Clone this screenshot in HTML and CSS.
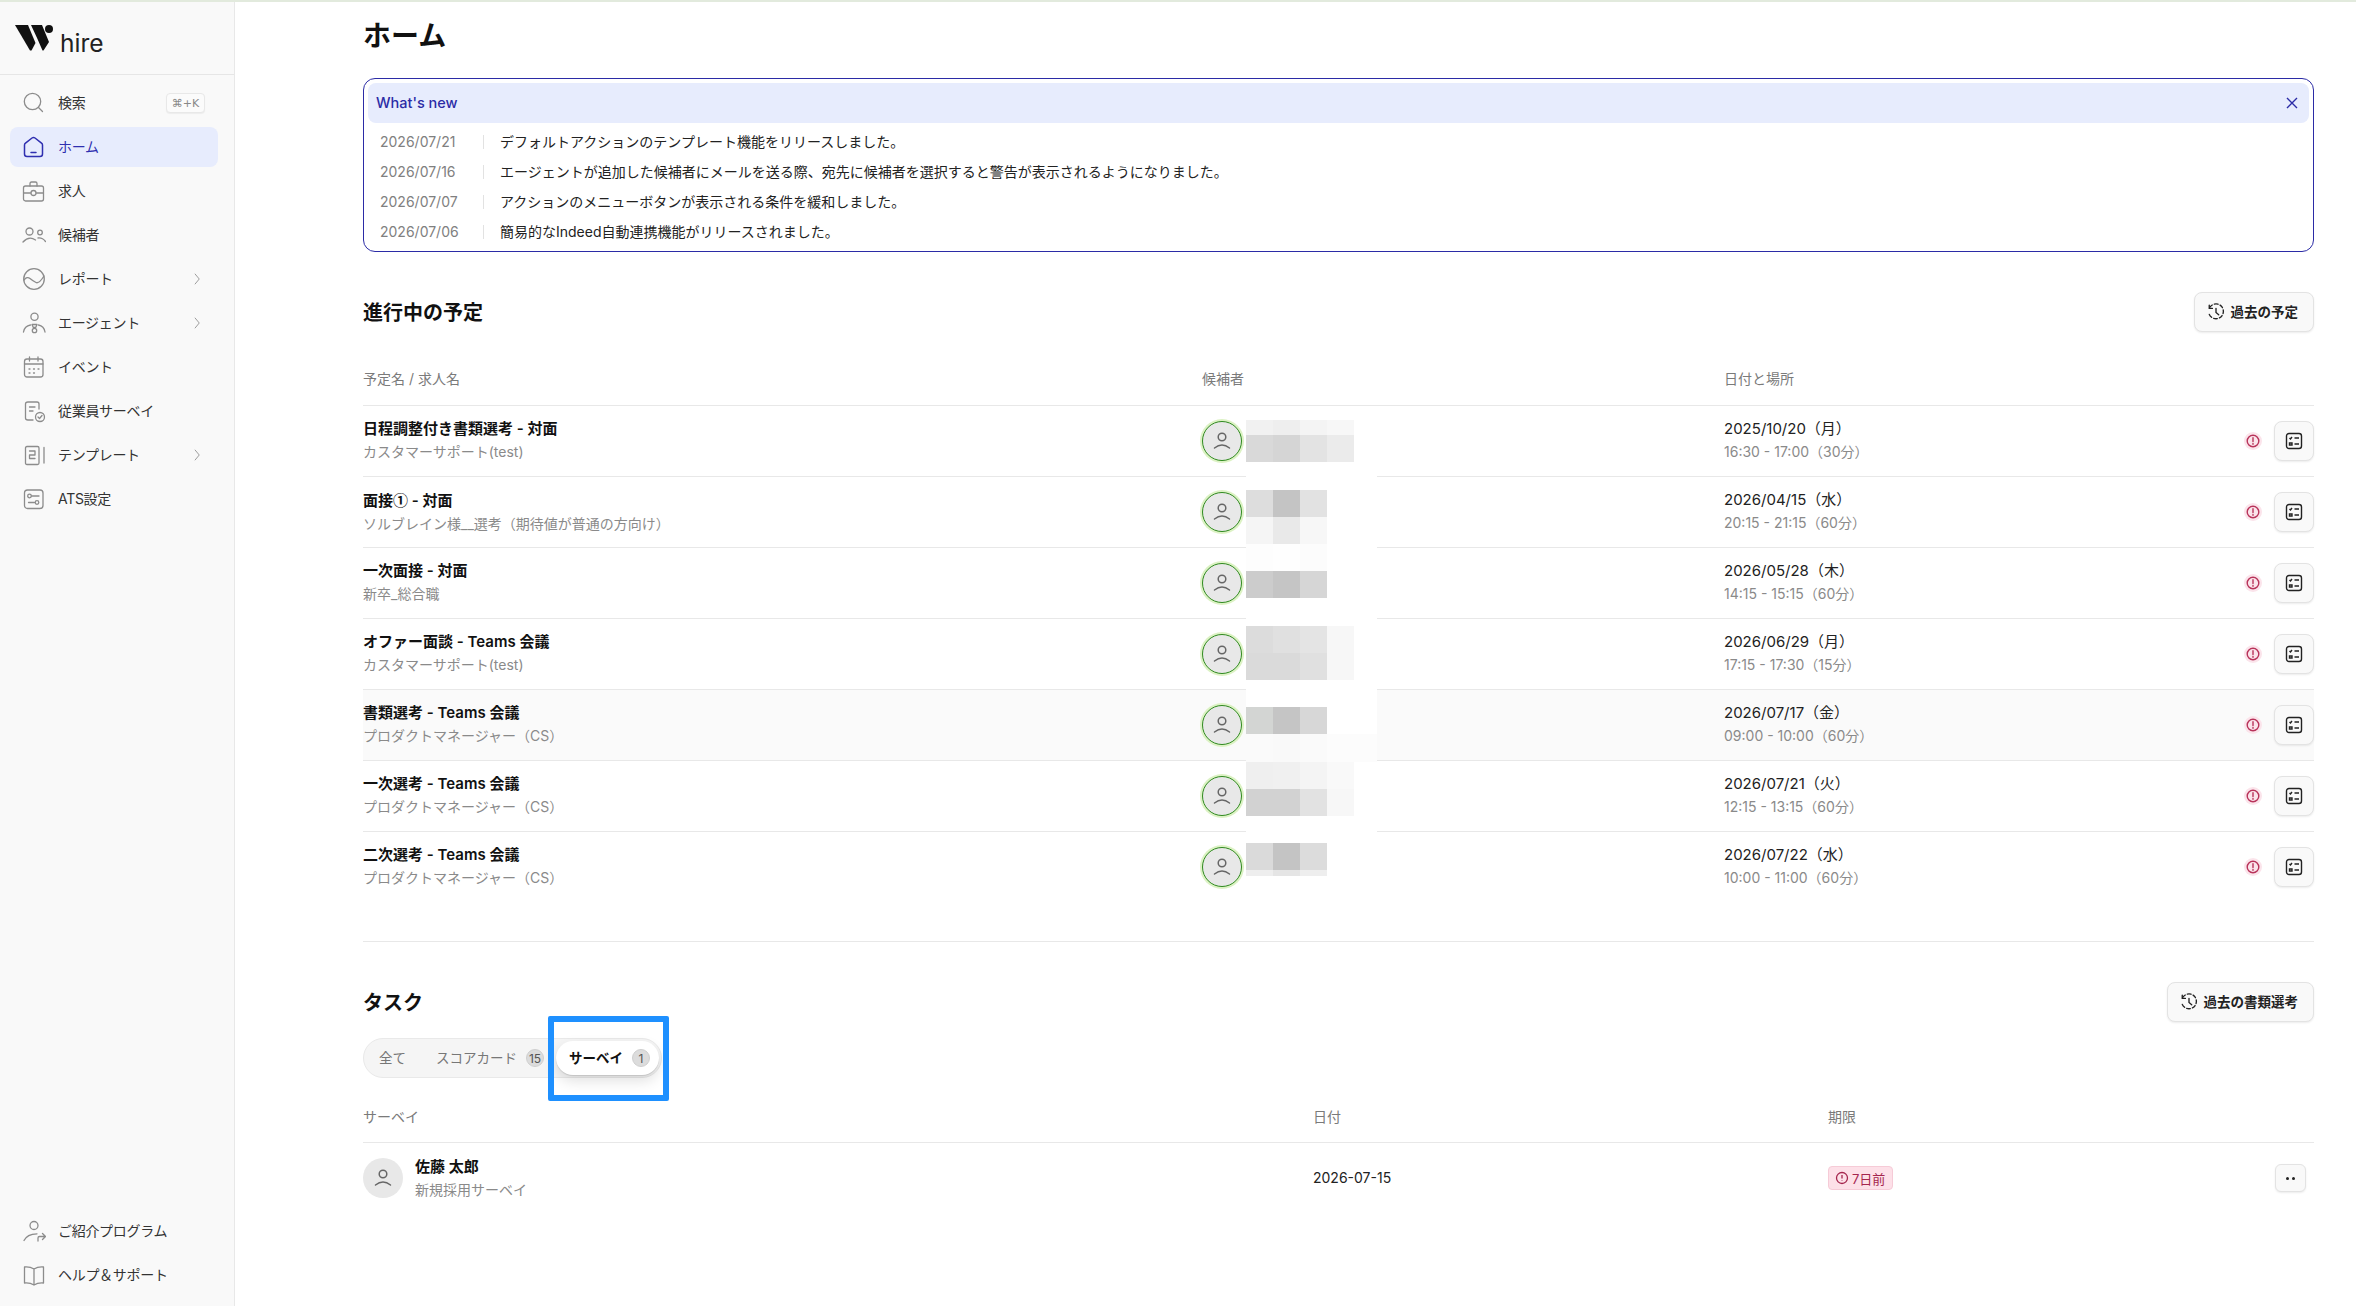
FILE: index.html
```html
<!DOCTYPE html>
<html lang="ja">
<head>
    <meta charset="UTF-8">
    <title>ホーム - hire</title>
    <link rel="stylesheet" href="styles.css">
</head>
<body>
    <div class="top-strip"></div>
    <div class="layout">
        <aside class="sidebar">
            <div class="logo">
                <svg class="logo-mark" width="44" height="30" viewBox="0 0 44 30">
                    <path d="M0 3 H13 L20.5 21 L16.5 28.5 H15 Z"/>
                    <path d="M16 3 H27 L34 20 L28.5 28.5 H27.5 L22.5 17 Z" />
                    <circle cx="34" cy="7" r="4"/>
                </svg>
                <span class="logo-text">hire</span>
            </div>
            <nav class="nav">
                <a class="nav-item">
                    <svg class="ico" viewBox="0 0 24 24"><circle cx="10.5" cy="10.5" r="8.2"/><path d="M16.5 16.5 20.5 20.5"/></svg>
                    <span>検索</span>
                    <kbd class="kbd">⌘+K</kbd>
                </a>
                <a class="nav-item active">
                    <svg class="ico" viewBox="0 0 24 24"><path d="M2.5 10Q2.5 9 3.5 8.2L10 3Q11.5 2 13 3L19.5 8.2Q20.5 9 20.5 10V19Q20.5 21.5 18 21.5H5Q2.5 21.5 2.5 19Z"/><path d="M9 17.5H14"/></svg>
                    <span>ホーム</span>
                </a>
                <a class="nav-item">
                    <svg class="ico" viewBox="0 0 24 24"><rect x="1.5" y="7" width="20" height="15" rx="2"/><path d="M8 7V4.5Q8 3 9.5 3H13.5Q15 3 15 4.5V7M2 14H8.5M14.5 14H21"/><circle cx="11.5" cy="14" r="2.5"/></svg>
                    <span>求人</span>
                </a>
                <a class="nav-item">
                    <svg class="ico" viewBox="0 0 24 24"><circle cx="7.5" cy="8.5" r="3.5"/><circle cx="18" cy="9.5" r="2.3"/><path d="M1 19Q7 12.5 13.5 17M16 15Q20.5 14.5 23.5 18.5"/></svg>
                    <span>候補者</span>
                </a>
                <a class="nav-item">
                    <svg class="ico" viewBox="0 0 24 24"><circle cx="12" cy="12" r="10.3"/><path d="M2 13Q5 9 8 11.5T14 15.5T22 9"/></svg>
                    <span>レポート</span>
                    <svg class="chev" viewBox="0 0 8 14"><path d="M1 1 6 7 1 13"/></svg>
                </a>
                <a class="nav-item">
                    <svg class="ico" viewBox="0 0 24 24"><circle cx="12.5" cy="5.8" r="3.6"/><path d="M1.5 21Q2.5 15 8.5 14M16.5 14Q22 15 23 21M10 13.5H15L13.7 16.5H11.3Z"/><circle cx="12.5" cy="19.5" r="2.2"/></svg>
                    <span>エージェント</span>
                    <svg class="chev" viewBox="0 0 8 14"><path d="M1 1 6 7 1 13"/></svg>
                </a>
                <a class="nav-item">
                    <svg class="ico" viewBox="0 0 24 24"><rect x="2.5" y="4" width="18.5" height="18" rx="2.5"/><path d="M2.5 9H21M7.5 2V6M16 2V6M7 14H8M11.5 14H12.5M16 14H17M7 18H8M11.5 18H12.5"/></svg>
                    <span>イベント</span>
                </a>
                <a class="nav-item">
                    <svg class="ico" viewBox="0 0 24 24"><path d="M17 10V5Q17 3 15 3H6Q3.5 3 3.5 5V19Q3.5 21 6 21H11"/><path d="M7.5 8H13M7.5 12H11"/><circle cx="18" cy="18" r="4.5"/><path d="M16 18 17.5 19.5 20 16.5"/></svg>
                    <span>従業員サーベイ</span>
                </a>
                <a class="nav-item">
                    <svg class="ico" viewBox="0 0 24 24"><path d="M15.5 21.5H5Q3.5 21.5 3.5 20V5Q3.5 3.5 5 3.5H15.5Q17 3.5 17 5V20Q17 21.5 15.5 21.5ZM22 4.5V20"/><path d="M7.5 8H13V12H7.5V15.5H13"/></svg>
                    <span>テンプレート</span>
                    <svg class="chev" viewBox="0 0 8 14"><path d="M1 1 6 7 1 13"/></svg>
                </a>
                <a class="nav-item">
                    <svg class="ico" viewBox="0 0 24 24"><rect x="2.5" y="3" width="18.5" height="18.5" rx="3"/><path d="M9.5 9H17M6.5 15.5H12.5"/><circle cx="7.5" cy="9" r="1.8"/><circle cx="15" cy="15.5" r="1.8"/></svg>
                    <span>ATS設定</span>
                </a>
            </nav>
            <nav class="nav nav-bottom">
                <a class="nav-item">
                    <svg class="ico" viewBox="0 0 24 24"><circle cx="12" cy="6.5" r="4"/><path d="M2 21.5Q5 15 15 14.8M16 22V19Q16 17.5 17.5 17.5H23M20.5 14.5 23.5 17.5 20.5 20.5"/></svg>
                    <span>ご紹介プログラム</span>
                </a>
                <a class="nav-item">
                    <svg class="ico" viewBox="0 0 24 24"><path d="M12 6Q8 3.5 2.5 4V20Q8 19.5 12 22Q16 19.5 21.5 20V4Q16 3.5 12 6ZM12 6V22"/></svg>
                    <span>ヘルプ＆サポート</span>
                </a>
            </nav>
        </aside>

        <main class="main">
            <h1 class="page-title">ホーム</h1>

            <section class="news">
                <div class="news-head">
                    <span>What's new</span>
                    <svg class="news-close" viewBox="0 0 14 14"><path d="M2 2 12 12M12 2 2 12"/></svg>
                </div>
                <ul class="news-list">
                    <li><span class="news-date">2026/07/21</span><span class="news-text">デフォルトアクションのテンプレート機能をリリースしました。</span></li>
                    <li><span class="news-date">2026/07/16</span><span class="news-text">エージェントが追加した候補者にメールを送る際、宛先に候補者を選択すると警告が表示されるようになりました。</span></li>
                    <li><span class="news-date">2026/07/07</span><span class="news-text">アクションのメニューボタンが表示される条件を緩和しました。</span></li>
                    <li><span class="news-date">2026/07/06</span><span class="news-text">簡易的なIndeed自動連携機能がリリースされました。</span></li>
                </ul>
            </section>

            <section class="section-head schedule-head">
                <h2>進行中の予定</h2>
                <button class="btn">
                    <svg class="btn-ico" viewBox="0 0 20 20"><path class="dash" d="M3 5A8.2 8.2 0 1 1 2 11"/><path d="M2.5 2.5V6H6M10 6V10.5L13 13"/></svg>
                    過去の予定
                </button>
            </section>

            <div class="table schedule">
                <div class="row row-head">
                    <span>予定名 / 求人名</span><span>候補者</span><span>日付と場所</span>
                </div>

                <div class="row">
                    <div><div class="title">日程調整付き書類選考 - 対面</div><div class="sub">カスタマーサポート(test)</div></div>
                    <div class="avatar green"><svg viewBox="0 0 24 24"><circle cx="12" cy="8" r="3.8"/><path d="M4.5 19Q12 13 19.5 19"/></svg></div>
                    <div><div class="when">2025/10/20（月）</div><div class="sub">16:30 - 17:00（30分）</div></div>
                    <div class="actions">
                        <svg class="alert" viewBox="0 0 18 18"><circle class="halo" cx="9" cy="9" r="9"/><circle cx="9" cy="9" r="5.8"/><path d="M9 5.8V9.5M9 11.5V12.3"/></svg>
                        <button class="icon-btn"><svg viewBox="0 0 18 18"><rect x="1.5" y="1.5" width="15" height="15" rx="2.5"/><path d="M4.5 6 5.5 7 7 5M9.5 6H14M4.5 11H7V13H4.5ZM9.5 12H14"/></svg></button>
                    </div>
                </div>
                <div class="row">
                    <div><div class="title">面接<span class="cjk">①</span> - 対面</div><div class="sub">ソルブレイン様__選考（期待値が普通の方向け）</div></div>
                    <div class="avatar green"><svg viewBox="0 0 24 24"><circle cx="12" cy="8" r="3.8"/><path d="M4.5 19Q12 13 19.5 19"/></svg></div>
                    <div><div class="when">2026/04/15（水）</div><div class="sub">20:15 - 21:15（60分）</div></div>
                    <div class="actions">
                        <svg class="alert" viewBox="0 0 18 18"><circle class="halo" cx="9" cy="9" r="9"/><circle cx="9" cy="9" r="5.8"/><path d="M9 5.8V9.5M9 11.5V12.3"/></svg>
                        <button class="icon-btn"><svg viewBox="0 0 18 18"><rect x="1.5" y="1.5" width="15" height="15" rx="2.5"/><path d="M4.5 6 5.5 7 7 5M9.5 6H14M4.5 11H7V13H4.5ZM9.5 12H14"/></svg></button>
                    </div>
                </div>
                <div class="row">
                    <div><div class="title">一次面接 - 対面</div><div class="sub">新卒_総合職</div></div>
                    <div class="avatar green"><svg viewBox="0 0 24 24"><circle cx="12" cy="8" r="3.8"/><path d="M4.5 19Q12 13 19.5 19"/></svg></div>
                    <div><div class="when">2026/05/28（木）</div><div class="sub">14:15 - 15:15（60分）</div></div>
                    <div class="actions">
                        <svg class="alert" viewBox="0 0 18 18"><circle class="halo" cx="9" cy="9" r="9"/><circle cx="9" cy="9" r="5.8"/><path d="M9 5.8V9.5M9 11.5V12.3"/></svg>
                        <button class="icon-btn"><svg viewBox="0 0 18 18"><rect x="1.5" y="1.5" width="15" height="15" rx="2.5"/><path d="M4.5 6 5.5 7 7 5M9.5 6H14M4.5 11H7V13H4.5ZM9.5 12H14"/></svg></button>
                    </div>
                </div>
                <div class="row">
                    <div><div class="title">オファー面談 - Teams 会議</div><div class="sub">カスタマーサポート(test)</div></div>
                    <div class="avatar green"><svg viewBox="0 0 24 24"><circle cx="12" cy="8" r="3.8"/><path d="M4.5 19Q12 13 19.5 19"/></svg></div>
                    <div><div class="when">2026/06/29（月）</div><div class="sub">17:15 - 17:30（15分）</div></div>
                    <div class="actions">
                        <svg class="alert" viewBox="0 0 18 18"><circle class="halo" cx="9" cy="9" r="9"/><circle cx="9" cy="9" r="5.8"/><path d="M9 5.8V9.5M9 11.5V12.3"/></svg>
                        <button class="icon-btn"><svg viewBox="0 0 18 18"><rect x="1.5" y="1.5" width="15" height="15" rx="2.5"/><path d="M4.5 6 5.5 7 7 5M9.5 6H14M4.5 11H7V13H4.5ZM9.5 12H14"/></svg></button>
                    </div>
                </div>
                <div class="row row-hover">
                    <div><div class="title">書類選考 - Teams 会議</div><div class="sub">プロダクトマネージャー（CS）</div></div>
                    <div class="avatar green"><svg viewBox="0 0 24 24"><circle cx="12" cy="8" r="3.8"/><path d="M4.5 19Q12 13 19.5 19"/></svg></div>
                    <div><div class="when">2026/07/17（金）</div><div class="sub">09:00 - 10:00（60分）</div></div>
                    <div class="actions">
                        <svg class="alert" viewBox="0 0 18 18"><circle class="halo" cx="9" cy="9" r="9"/><circle cx="9" cy="9" r="5.8"/><path d="M9 5.8V9.5M9 11.5V12.3"/></svg>
                        <button class="icon-btn"><svg viewBox="0 0 18 18"><rect x="1.5" y="1.5" width="15" height="15" rx="2.5"/><path d="M4.5 6 5.5 7 7 5M9.5 6H14M4.5 11H7V13H4.5ZM9.5 12H14"/></svg></button>
                    </div>
                </div>
                <div class="row">
                    <div><div class="title">一次選考 - Teams 会議</div><div class="sub">プロダクトマネージャー（CS）</div></div>
                    <div class="avatar green"><svg viewBox="0 0 24 24"><circle cx="12" cy="8" r="3.8"/><path d="M4.5 19Q12 13 19.5 19"/></svg></div>
                    <div><div class="when">2026/07/21（火）</div><div class="sub">12:15 - 13:15（60分）</div></div>
                    <div class="actions">
                        <svg class="alert" viewBox="0 0 18 18"><circle class="halo" cx="9" cy="9" r="9"/><circle cx="9" cy="9" r="5.8"/><path d="M9 5.8V9.5M9 11.5V12.3"/></svg>
                        <button class="icon-btn"><svg viewBox="0 0 18 18"><rect x="1.5" y="1.5" width="15" height="15" rx="2.5"/><path d="M4.5 6 5.5 7 7 5M9.5 6H14M4.5 11H7V13H4.5ZM9.5 12H14"/></svg></button>
                    </div>
                </div>
                <div class="row row-last">
                    <div><div class="title">二次選考 - Teams 会議</div><div class="sub">プロダクトマネージャー（CS）</div></div>
                    <div class="avatar green"><svg viewBox="0 0 24 24"><circle cx="12" cy="8" r="3.8"/><path d="M4.5 19Q12 13 19.5 19"/></svg></div>
                    <div><div class="when">2026/07/22（水）</div><div class="sub">10:00 - 11:00（60分）</div></div>
                    <div class="actions">
                        <svg class="alert" viewBox="0 0 18 18"><circle class="halo" cx="9" cy="9" r="9"/><circle cx="9" cy="9" r="5.8"/><path d="M9 5.8V9.5M9 11.5V12.3"/></svg>
                        <button class="icon-btn"><svg viewBox="0 0 18 18"><rect x="1.5" y="1.5" width="15" height="15" rx="2.5"/><path d="M4.5 6 5.5 7 7 5M9.5 6H14M4.5 11H7V13H4.5ZM9.5 12H14"/></svg></button>
                    </div>
                </div>

                <!-- candidate names are pixelated in the capture -->
                <div class="mosaic">
                    <div class="m-row h15"><i class="f1"></i><i class="ee"></i><i class="f4"></i><i class="f7"></i></div>
                    <div class="m-row"><i class="d9"></i><i class="d5"></i><i class="e3"></i><i class="eb"></i></div>
                    <div class="m-row h28"></div>
                    <div class="m-row"><i class="dd"></i><i class="c4"></i><i class="e2"></i></div>
                    <div class="m-row"><i class="f5"></i><i class="e9"></i><i class="f7"></i></div>
                    <div class="m-row"><i class="fd"></i><i class="fe"></i><i class="fc"></i></div>
                    <div class="m-row"><i class="cc"></i><i class="c5"></i><i class="d6"></i></div>
                    <div class="m-row h28"></div>
                    <div class="m-row"><i class="dc"></i><i class="e0"></i><i class="e4"></i><i class="f7"></i></div>
                    <div class="m-row"><i class="da"></i><i class="da"></i><i class="e0"></i><i class="f7"></i></div>
                    <div class="m-row"></div>
                    <div class="m-row"><i class="d3"></i><i class="c5"></i><i class="d7"></i></div>
                    <div class="m-row h28"><i class="fa"></i><i class="f9"></i><i class="fa"></i><i class="fc"></i><i class="fc"></i></div>
                    <div class="m-row"><i class="ef"></i><i class="f0"></i><i class="f4"></i><i class="f9"></i></div>
                    <div class="m-row"><i class="d2"></i><i class="d2"></i><i class="e2"></i><i class="f7"></i></div>
                    <div class="m-row"></div>
                    <div class="m-row"><i class="da"></i><i class="c4"></i><i class="dc"></i></div>
                    <div class="m-row h6"><i class="ee"></i><i class="e5"></i><i class="ee"></i></div>
                </div>
            </div>

            <hr class="divider">

            <section class="section-head">
                <h2>タスク</h2>
                <button class="btn">
                    <svg class="btn-ico" viewBox="0 0 20 20"><path class="dash" d="M3 5A8.2 8.2 0 1 1 2 11"/><path d="M2.5 2.5V6H6M10 6V10.5L13 13"/></svg>
                    過去の書類選考
                </button>
            </section>

            <div class="tabs">
                <span class="tab">全て</span>
                <span class="tab tab-score">スコアカード<b class="count">15</b></span>
                <span class="tab tab-active">サーベイ<b class="count">1</b></span>
                <span class="highlight"></span>
            </div>

            <div class="table tasks">
                <div class="row row-head task-head">
                    <span>サーベイ</span><span>日付</span><span>期限</span>
                </div>
                <div class="row row-last">
                    <div class="person">
                        <div class="avatar"><svg viewBox="0 0 24 24"><circle cx="12" cy="8" r="3.8"/><path d="M4.5 19Q12 13 19.5 19"/></svg></div>
                        <div><div class="title">佐藤 太郎</div><div class="sub">新規採用サーベイ</div></div>
                    </div>
                    <div class="when">2026-07-15</div>
                    <div><span class="overdue"><svg viewBox="0 0 14 14"><circle cx="7" cy="7" r="5.5"/><path d="M7 4V7.5M7 9.5V10"/></svg>7日前</span></div>
                    <div class="actions"><button class="dots-btn"><i></i><i></i></button></div>
                </div>
            </div>
        </main>
    </div>
</body>
</html>
```

FILE: styles.css
```css
* {
    box-sizing: border-box;
}
body {
    margin: 0;
    font-family: Inter, "Noto Sans CJK JP", sans-serif;
    font-size: 14px;
    color: #111;
    background: white;
    overflow: hidden;
}
.cjk {
    font-family: "Noto Sans CJK JP", sans-serif;
}
.top-strip {
    height: 2px;
    background: #e2eadd;
}
.layout {
    display: flex;
    height: 1304px;
}

/* sidebar */
.sidebar {
    width: 235px;
    flex: none;
    display: flex;
    flex-direction: column;
    background: #f9f9f9;
    border-right: 1px solid #e8e8e8;
}
.logo {
    height: 73px;
    display: flex;
    align-items: flex-start;
    border-bottom: 1px solid #e6e6e6;
    padding: 20px 0 0 15px;
}
.logo-mark {
    flex: none;
    fill: #111;
}
.logo-text {
    margin: 6px 0 0 1px;
    font-size: 24.5px;
    line-height: 30px;
    color: #222;
}
.nav {
    display: flex;
    flex-direction: column;
    gap: 4px;
    padding: 8px 16px 0 10px;
}
.nav-bottom {
    margin-top: auto;
    padding-top: 0;
    padding-bottom: 11px;
}
.nav-item {
    height: 40px;
    display: flex;
    align-items: center;
    gap: 12px;
    padding: 0 14px 0 12px;
    border-radius: 8px;
    color: #333;
    letter-spacing: -0.3px;
}
.nav-item span {
    padding-bottom: 2px;
}
.nav-item.active {
    background: #e7ecfd;
    color: #2f2fb0;
}
.ico {
    width: 24px;
    height: 24px;
    flex: none;
    fill: none;
    stroke: #8c8c8c;
    stroke-width: 1.3;
    stroke-linecap: round;
    stroke-linejoin: round;
}
.active .ico {
    stroke: #2f2fb0;
    stroke-width: 1.5;
}
.kbd {
    margin-left: auto;
    margin-right: -1px;
    width: 39px;
    height: 20px;
    display: flex;
    align-items: center;
    justify-content: center;
    font-family: "DejaVu Sans", sans-serif;
    font-size: 11px;
    letter-spacing: 0;
    color: #888;
    background: #fbfbfb;
    border: 1px solid #e8e8e8;
    border-radius: 4px;
    box-shadow: 0 1px 1px rgba(0,0,0,0.05);
}
.chev {
    width: 7px;
    height: 14px;
    margin-left: auto;
    margin-right: 3px;
    fill: none;
    stroke: #999;
    stroke-width: 1.1;
}

/* main column */
.main {
    flex: 1;
    min-width: 0;
    padding: 14px 42px 0 128px;
}
.page-title {
    margin: 0 0 22px;
    font-size: 28px;
    line-height: 40px;
    font-weight: 700;
}
.news {
    height: 174px;
    padding: 4px;
    border: 1px solid #2b2ba6;
    border-radius: 12px;
}
.news-head {
    height: 40px;
    display: flex;
    align-items: center;
    justify-content: space-between;
    padding: 0 10px 0 8px;
    background: #e7ecfd;
    border-radius: 8px;
    color: #2b2ba6;
    font-size: 14.5px;
    font-weight: 500;
}
.news-head span {
    padding-bottom: 2px;
}
.news-close {
    width: 14px;
    height: 14px;
    fill: none;
    stroke: #2b2ba6;
    stroke-width: 1.4;
}
.news-list {
    list-style: none;
    margin: 4px 0 0;
    padding: 0 0 0 12px;
}
.news-list li {
    height: 30px;
    display: flex;
    align-items: center;
}
.news-date {
    width: 104px;
    flex: none;
    color: #808080;
    border-right: 1px solid #e2e2e2;
    line-height: 14px;
}
.news-text {
    padding: 0 0 2px 16px;
    color: #222;
}
.section-head {
    height: 40px;
    display: flex;
    align-items: center;
    justify-content: space-between;
}
.schedule-head {
    margin-top: 40px;
}
.section-head h2 {
    margin: 0;
    padding-bottom: 2px;
    font-size: 20px;
    font-weight: 700;
}
.btn {
    height: 40px;
    display: flex;
    align-items: center;
    gap: 6px;
    padding: 0 15px 2px 12px;
    font: inherit;
    font-weight: 600;
    font-size: 13.5px;
    color: #222;
    background: #f9f9f9;
    border: 1px solid #e3e3e3;
    border-radius: 8px;
    box-shadow: 0 1px 2px rgba(0,0,0,0.08);
}
.btn-ico {
    width: 18px;
    height: 18px;
    margin-top: 2px;
    fill: none;
    stroke: #222;
    stroke-width: 1.5;
    stroke-linecap: round;
}
.btn-ico .dash {
    stroke-dasharray: 4 2.5;
}

/* tables */
.table {
    position: relative;
}
.row {
    display: grid;
    align-items: center;
    height: 71px;
    border-bottom: 1px solid #e8e8e8;
}
.schedule .row {
    grid-template-columns: 839px 522px 1fr auto;
}
.tasks .row {
    grid-template-columns: 950px 515px 1fr auto;
}
.row-head {
    height: 74px;
    padding: 36px 0 16px;
    line-height: 20px;
    color: #7a7a7a;
}
.task-head {
    height: 65px;
    padding-top: 29px;
}
.row-hover {
    background: #fafafa;
}
.row-last {
    border-bottom-color: transparent;
}
.title {
    line-height: 20px;
    font-size: 15px;
    font-weight: 600;
}
.schedule .title,
.schedule .when {
    margin-top: -1px;
}
.sub {
    margin-top: 3px;
    line-height: 20px;
    color: #8a8a8a;
}
.when {
    line-height: 20px;
    color: #222;
}
.schedule .when {
    font-size: 15px;
}
.avatar {
    width: 40px;
    height: 40px;
    display: flex;
    align-items: center;
    justify-content: center;
    border-radius: 50%;
    background: #e8e8e8;
}
.avatar svg {
    width: 24px;
    height: 24px;
    fill: none;
    stroke: #666;
    stroke-width: 1.5;
    stroke-linecap: round;
}
.avatar.green {
    border: 1.5px solid #2f8a1f;
    box-shadow: 0 0 0 2px #dcf2c4;
}
.actions {
    display: flex;
    align-items: center;
    gap: 12px;
}
.alert {
    width: 18px;
    height: 18px;
    fill: none;
    stroke: #b8335a;
    stroke-width: 1.4;
    stroke-linecap: round;
}
.alert .halo {
    fill: #fbe4eb;
    stroke: none;
}
.icon-btn {
    width: 40px;
    height: 40px;
    display: flex;
    align-items: center;
    justify-content: center;
    padding: 0;
    background: #f9f9f9;
    border: 1px solid #e3e3e3;
    border-radius: 8px;
    box-shadow: 0 1px 2px rgba(0,0,0,0.08);
}
.icon-btn svg {
    width: 18px;
    height: 18px;
    fill: none;
    stroke: #222;
    stroke-width: 1.4;
}

/* pixelated names */
.mosaic {
    position: absolute;
    left: 883px;
    top: 88px;
    width: 131px;
    background: white;
}
.m-row {
    display: flex;
    height: 27px;
}
.m-row i {
    width: 27px;
    flex: none;
}
.m-row i:nth-child(5) {
    width: 23px;
}
.h15 { height: 15px; }
.h28 { height: 28px; }
.h6 { height: 6px; }
.c4 { background: #c4c4c4; }
.c5 { background: #c5c5c5; }
.cc { background: #cccccc; }
.d2 { background: #d2d2d2; }
.d3 { background: #d3d5d3; }
.d5 { background: #d5d5d5; }
.d6 { background: #d6d6d6; }
.d7 { background: #d7d7d7; }
.d9 { background: #d9d9d9; }
.da { background: #dadada; }
.dc { background: #dcdcdc; }
.dd { background: #dddddd; }
.e0 { background: #e0e0e0; }
.e2 { background: #e2e2e2; }
.e3 { background: #e3e3e3; }
.e4 { background: #e4e4e4; }
.e5 { background: #e5e5e5; }
.e9 { background: #e9e9e9; }
.eb { background: #ebebeb; }
.ee { background: #eeeeee; }
.ef { background: #efefef; }
.f0 { background: #f0f0f0; }
.f1 { background: #f1f1f1; }
.f4 { background: #f4f4f4; }
.f5 { background: #f5f5f5; }
.f7 { background: #f7f7f7; }
.f9 { background: #f9f9f9; }
.fa { background: #fafafa; }
.fc { background: #fcfcfc; }
.fd { background: #fdfdfd; }
.fe { background: #fefefe; }

.divider {
    margin: 38px 0 40px;
    border: none;
    border-top: 1px solid #e8e8e8;
}

/* task tabs */
.tabs {
    position: relative;
    display: inline-flex;
    align-items: center;
    gap: 4px;
    height: 40px;
    margin-top: 16px;
    padding: 0 2px;
    background: #f5f5f5;
    border: 1px solid #e9e9e9;
    border-radius: 20px;
    font-size: 13.5px;
    vertical-align: top;
}
.tab {
    display: flex;
    align-items: center;
    height: 34px;
    padding: 0 13px 2px;
    color: #777;
}
.tab-score {
    padding-right: 8px;
}
.tab-active {
    padding: 0 9px 2px 13px;
    background: white;
    border-radius: 17px;
    color: #111;
    font-weight: 600;
    box-shadow: 0 1px 1px rgba(0,0,0,0.12), 0 6px 14px rgba(0,0,0,0.12);
}
.count {
    width: 18px;
    height: 18px;
    display: flex;
    align-items: center;
    justify-content: center;
    margin: 2px 0 0 9px;
    background: #dcdcdc;
    border: 1px solid #cfcfcf;
    border-radius: 50%;
    font-size: 12px;
    font-weight: 400;
    color: #555;
}
.highlight {
    position: absolute;
    left: 184px;
    top: -23px;
    width: 121px;
    height: 85px;
    border: 6px solid #1e90ff;
    border-radius: 2px;
}
.person {
    display: flex;
    align-items: center;
    gap: 12px;
}
.overdue {
    display: inline-flex;
    align-items: center;
    gap: 3px;
    height: 24px;
    padding: 0 7px 0 6px;
    background: #fde0e8;
    border: 1px solid #f6cbd7;
    border-radius: 4px;
    font-size: 13px;
    color: #a5264e;
}
.overdue svg {
    width: 14px;
    height: 14px;
    fill: none;
    stroke: #a5264e;
    stroke-width: 1.3;
}
.dots-btn {
    width: 31px;
    height: 28px;
    margin-right: 8px;
    display: flex;
    align-items: center;
    justify-content: center;
    gap: 3px;
    padding: 0;
    background: #f9f9f9;
    border: 1px solid #e3e3e3;
    border-radius: 6px;
    box-shadow: 0 1px 2px rgba(0,0,0,0.08);
}
.dots-btn i {
    width: 3px;
    height: 3px;
    background: #222;
    border-radius: 50%;
}
```
